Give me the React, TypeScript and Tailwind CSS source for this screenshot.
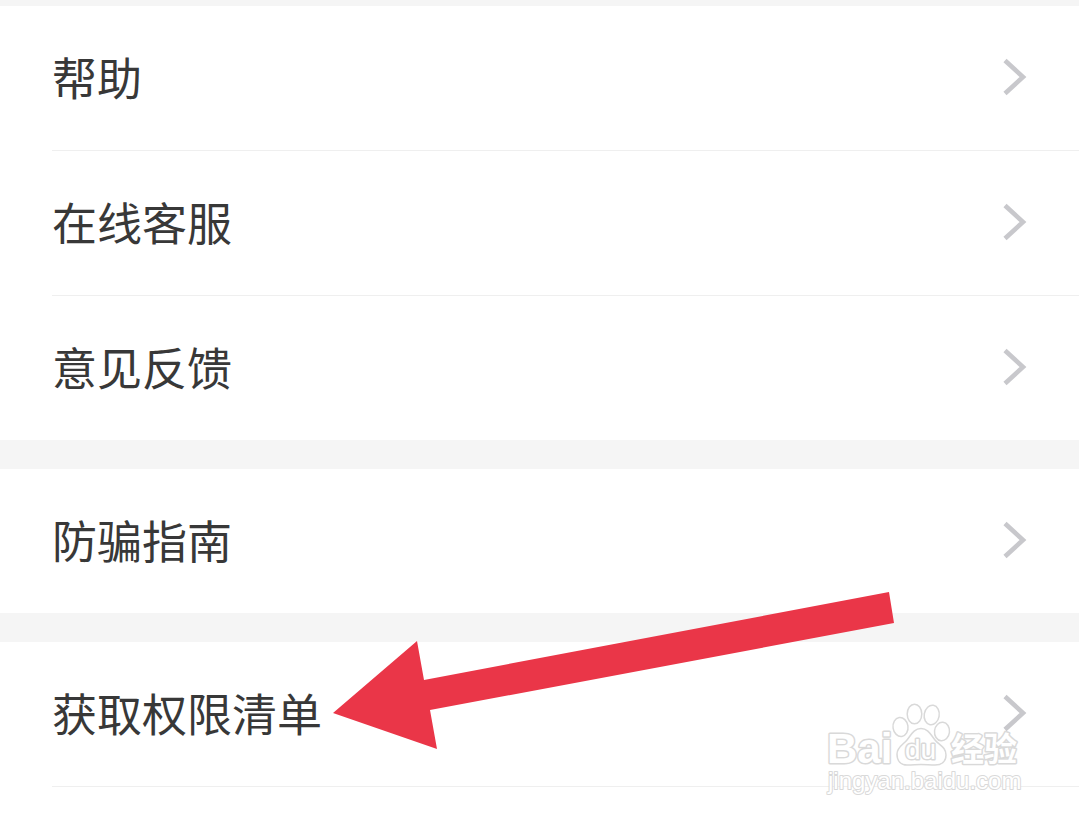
import React from 'react';

const GROUPS: string[][] = [
  ['帮助', '在线客服', '意见反馈'],
  ['防骗指南'],
  ['获取权限清单'],
];

const Chevron: React.FC = () => (
  <svg className="w-6 h-10 shrink-0" viewBox="0 0 24 40" fill="none" stroke="#c8c8cc" strokeWidth="4.6" aria-hidden="true">
    <path d="M2 3.500 L20 20 L2 36.500" />
  </svg>
);

const MenuRow: React.FC<{ label: string }> = ({ label }) => (
  <button type="button" className="flex items-center justify-between w-full h-36 pl-[52px] pr-[52px] pb-0.5 text-left">
    <span className="text-[45px] leading-[60px] text-[#383838]">{label}</span>
    <Chevron />
  </button>
);

const Divider: React.FC = () => <div className="ml-[52px] h-px bg-[#efefef]"></div>;

const Arrow: React.FC = () => (
  <svg
    className="absolute left-[333px] top-[592px] w-[562px] h-[158px] pointer-events-none"
    viewBox="0 0 562 158"
    aria-hidden="true"
  >
    <polygon points="0,121 84,49 91,88 556,0 561,31 97,118 104,157" fill="#ea3648" />
  </svg>
);

const Watermark: React.FC = () => (
  <svg
    className="absolute left-[820px] top-[696px] w-[210px] h-[108px] pointer-events-none"
    viewBox="0 0 210 108"
    fill="#ffffff"
    stroke="#d9d9d9"
    strokeWidth="1.5"
  >
    <g fontFamily="'Liberation Sans', 'Noto Sans CJK SC', sans-serif" strokeLinejoin="round">
      <ellipse cx="80.5" cy="31" rx="7.500" ry="9.500" transform="rotate(-8 80.5 31)" />
      <ellipse cx="94.5" cy="18" rx="7.300" ry="9.800" />
      <ellipse cx="111.7" cy="19" rx="7.500" ry="9.800" transform="rotate(10 111.7 19)" />
      <ellipse cx="122" cy="35.5" rx="7.500" ry="9.300" transform="rotate(6 122 35.5)" />
      <path d="M101 32.500 C108 32.500 111 39 115 44 C119 49 126 51 126 59 C126 66 121 69 115 69 C110 69 106 68.500 101 68.500 C96 68.500 93 69 87 69 C81 69 77 65 77 58 C77 51 84 48 87 44 C91 39 94 32.500 101 32.500 Z" />
      <g paintOrder="stroke" strokeWidth="3">
        <text x="7" y="67" fontSize="42" fontWeight="700">Bai</text>
        <text x="85" y="63" fontSize="28">du</text>
        <text x="131" y="65" fontSize="33" fontWeight="700">经验</text>
        <text x="8" y="93" fontSize="24" strokeWidth="2">jingyan.baidu.com</text>
      </g>
    </g>
  </svg>
);

export default function App() {
  return (
    <main className="relative min-h-screen overflow-hidden bg-white font-['Noto_Sans_CJK_SC',sans-serif]">
      <div className="h-1.5 bg-[#f5f5f5]"></div>
      {GROUPS.map((rows, g) => (
        <section key={rows[0]}>
          {g > 0 && <div className="h-[29px] bg-[#f5f5f5]"></div>}
          {rows.map((label, i) => (
            <React.Fragment key={label}>
              {i > 0 && <Divider />}
              <MenuRow label={label} />
            </React.Fragment>
          ))}
        </section>
      ))}
      <Divider />
      <Arrow />
      <Watermark />
    </main>
  );
}
